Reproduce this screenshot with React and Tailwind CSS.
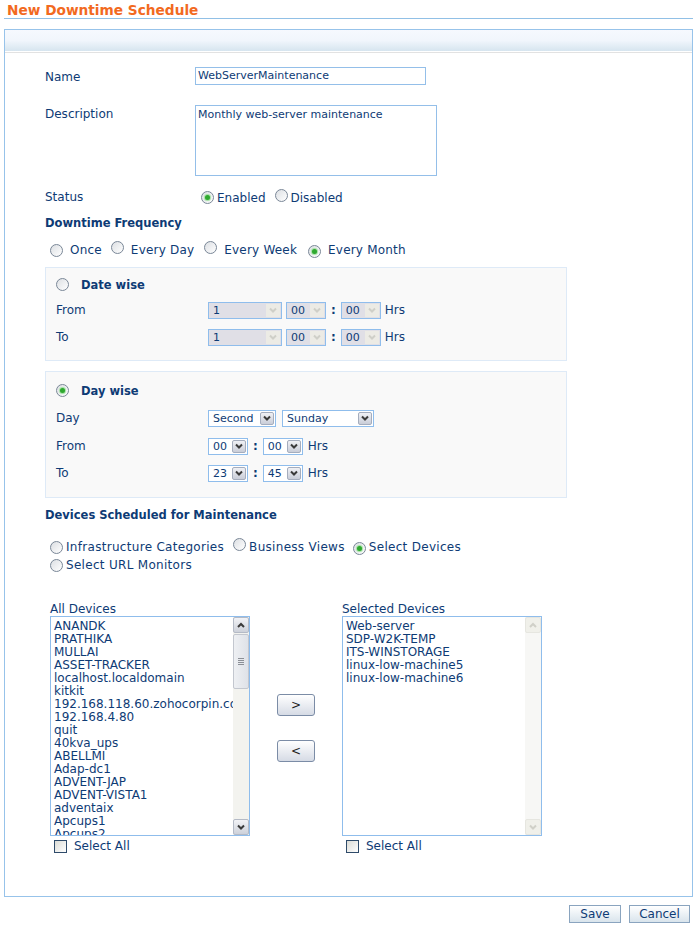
import React from 'react';

const font = { fontFamily: '"DejaVu Sans", Verdana, sans-serif' };

// radio button like the old XP style
const Radio = ({ checked }) => (
  <span className="inline-flex h-[13px] w-[13px] shrink-0 items-center justify-center rounded-full border border-[#7a8797] bg-gradient-to-br from-[#dcdfe3] to-white">
    {checked && <span className="h-[5px] w-[5px] rounded-full bg-[#2fa82f] shadow-[0_0_1px_1px_#9fe09f]" />}
  </span>
);

const Checkbox = () => (
  <span className="inline-block h-[13px] w-[13px] shrink-0 border border-[#2f4b6a] bg-gradient-to-br from-[#dcdcd6] to-white" />
);

const Chevron = ({ color = '#333', up = false }) => (
  <svg width="8" height="6" viewBox="0 0 8 6">
    <path d={up ? 'M1 5 L4 2 L7 5' : 'M1 1.5 L4 4.5 L7 1.5'} fill="none" stroke={color} strokeWidth="2" />
  </svg>
);

const Select = ({ value, className, disabled }) => (
  <div className={`flex h-[17px] items-stretch border border-[#8fbdec] text-[11px] ${disabled ? 'bg-[#e0dfe6]' : 'bg-white'} ${className}`}>
    <span className="flex-1 pl-[4px] leading-[15px]">{value}</span>
    {disabled ? (
      <span className="m-px flex w-[14px] items-center justify-center bg-[#ecebe5]">
        <Chevron color="#cfcfc8" />
      </span>
    ) : (
      <span className="m-px flex w-[14px] items-center justify-center rounded-[2px] border border-[#a5adbd] bg-gradient-to-b from-[#f0f1f5] to-[#c9cdd8]">
        <Chevron color="#3a3a3a" />
      </span>
    )}
  </div>
);

const Label = ({ children, className = '' }) => (
  <div className={`w-[150px] shrink-0 ${className}`}>{children}</div>
);

const allDevices = [
  'ANANDK', 'PRATHIKA', 'MULLAI', 'ASSET-TRACKER', 'localhost.localdomain', 'kitkit',
  '192.168.118.60.zohocorpin.com', '192.168.4.80', 'quit', '40kva_ups', 'ABELLMI',
  'Adap-dc1', 'ADVENT-JAP', 'ADVENT-VISTA1', 'adventaix', 'Apcups1', 'Apcups2',
];
const selectedDevices = ['Web-server', 'SDP-W2K-TEMP', 'ITS-WINSTORAGE', 'linux-low-machine5', 'linux-low-machine6'];

const ScrollArrow = ({ up, faded }) => (
  <div className={`flex h-[16px] w-[16px] items-center justify-center rounded-[2px] border ${faded ? 'border-[#e6e6e0] bg-[#f0f0ea]' : 'border-[#b4bac6] bg-gradient-to-b from-[#f2f3f6] to-[#cdd1da]'}`}>
    <Chevron up={up} color={faded ? '#d0d0c8' : '#3a3a3a'} />
  </div>
);

const ListBox = ({ items, active }) => (
  <div className="flex h-[220px] w-[200px] border border-[#8fbdec] bg-white">
    <div className="flex-1 overflow-hidden whitespace-nowrap pl-[3px] pt-[3px] leading-[13px]">
      {items.map((d) => (
        <div key={d}>{d}</div>
      ))}
    </div>
    <div className={`flex w-[16px] flex-col ${active ? 'bg-[#f3f3ef]' : 'bg-[#f7f7f5]'}`}>
      <ScrollArrow up faded={!active} />
      {active && (
        <div className="mt-px flex h-[55px] flex-col items-center justify-center gap-[1px] rounded-[2px] border border-[#c3c7cf] bg-gradient-to-r from-[#eef0f3] to-[#dfe2e8]">
          <span className="h-px w-[6px] bg-[#8b8f96]" />
          <span className="h-px w-[6px] bg-[#8b8f96]" />
          <span className="h-px w-[6px] bg-[#8b8f96]" />
          <span className="h-px w-[6px] bg-[#8b8f96]" />
        </div>
      )}
      <div className="flex-1" />
      <ScrollArrow faded={!active} />
    </div>
  </div>
);

const MoveButton = ({ children }) => (
  <button className="h-[22px] w-[38px] rounded-[3px] border border-[#7b8ca6] bg-gradient-to-b from-white to-[#d6dbe5] text-[12px] text-[#222]">
    {children}
  </button>
);

export default function App() {
  return (
    <div className="min-h-[929px] w-[697px] bg-white text-[12px] text-[#0e3b75]" style={font}>
      {/* page title */}
      <div className="h-[18px] pl-[7px] pt-[2px] text-[13.7px] font-bold leading-[16px] text-[#f26a1f]">New Downtime Schedule</div>
      <div className="mx-[4px] h-px bg-[#91c0e6]" />

      <div className="mx-[4px] mt-[10px] h-[868px] border border-[#97c3ea]">
        <div className="h-[21px] bg-gradient-to-b from-[#f6f9fe] via-[#f1f6fc] to-[#d6e5ef]" />
        <div className="h-[2px] border-t border-white bg-[#e2e2e2]" />

        <div className="pl-[40px]">
          {/* Name */}
          <div className="mt-[14px] flex h-[18px] items-center">
            <Label className="pt-[1px]">Name</Label>
            <div className="h-[18px] w-[231px] border border-[#94bfe9] pl-[2px] text-[11px] leading-[16px]">WebServerMaintenance</div>
          </div>

          {/* Description */}
          <div className="mt-[20px] flex items-start">
            <Label>Description</Label>
            <div className="h-[71px] w-[242px] border border-[#94bfe9] pl-[2px] pt-[1px] text-[11px]">Monthly web-server maintenance</div>
          </div>

          {/* Status */}
          <div className="mt-[11px] flex h-[20px] items-center">
            <Label>Status</Label>
            <div className="flex items-center pl-[6px] pt-[1px]">
              <Radio checked />
              <span className="ml-[3px]">Enabled</span>
              <span className="ml-[9px]"><Radio /></span>
              <span className="ml-[3px]">Disabled</span>
            </div>
          </div>

          <div className="mt-[5px] flex h-[20px] items-center pt-[3px] text-[11.5px] font-bold">Downtime Frequency</div>

          <div className="mt-[8px] flex h-[20px] items-center pl-[5px] tracking-[0.2px]">
            <Radio />
            <span className="ml-[7px]">Once</span>
            <span className="ml-[9px]"><Radio /></span>
            <span className="ml-[7px]">Every Day</span>
            <span className="ml-[10px]"><Radio /></span>
            <span className="ml-[7px]">Every Week</span>
            <span className="ml-[11px]"><Radio checked /></span>
            <span className="ml-[7px]">Every Month</span>
          </div>

          {/* Date wise */}
          <div className="mt-[7px] h-[94px] w-[522px] border border-[#deeaf7] bg-[#f9f9f9] pl-[10px] pt-[7px]">
            <div className="flex h-[18px] items-center">
              <Radio />
              <span className="ml-[12px] pt-[3px] text-[11.5px] font-bold">Date wise</span>
            </div>
            <div className="mt-[8px] flex h-[18px] items-center">
              <div className="w-[152px]">From</div>
              <Select disabled value="1" className="w-[74px]" />
              <Select disabled value="00" className="ml-[4px] w-[40px]" />
              <span className="mx-[5px] font-bold">:</span>
              <Select disabled value="00" className="w-[40px]" />
              <span className="ml-[4px]">Hrs</span>
            </div>
            <div className="mt-[9px] flex h-[18px] items-center">
              <div className="w-[152px]">To</div>
              <Select disabled value="1" className="w-[74px]" />
              <Select disabled value="00" className="ml-[4px] w-[40px]" />
              <span className="mx-[5px] font-bold">:</span>
              <Select disabled value="00" className="w-[40px]" />
              <span className="ml-[4px]">Hrs</span>
            </div>
          </div>

          {/* Day wise */}
          <div className="mt-[10px] h-[127px] w-[522px] border border-[#deeaf7] bg-[#f9f9f9] pl-[10px] pt-[9px]">
            <div className="flex h-[18px] items-center">
              <Radio checked />
              <span className="ml-[12px] pt-[3px] text-[11.5px] font-bold">Day wise</span>
            </div>
            <div className="mt-[10px] flex h-[18px] items-center">
              <div className="w-[152px]">Day</div>
              <Select value="Second" className="w-[68px]" />
              <Select value="Sunday" className="ml-[6px] w-[92px]" />
            </div>
            <div className="mt-[10px] flex h-[18px] items-center">
              <div className="w-[152px]">From</div>
              <Select value="00" className="w-[40px]" />
              <span className="mx-[5px] font-bold">:</span>
              <Select value="00" className="w-[40px]" />
              <span className="ml-[5px]">Hrs</span>
            </div>
            <div className="mt-[9px] flex h-[18px] items-center">
              <div className="w-[152px]">To</div>
              <Select value="23" className="w-[40px]" />
              <span className="mx-[5px] font-bold">:</span>
              <Select value="45" className="w-[40px]" />
              <span className="ml-[5px]">Hrs</span>
            </div>
          </div>

          <div className="mt-[6px] flex h-[20px] items-center pt-[3px] text-[11.5px] font-bold">Devices Scheduled for Maintenance</div>

          <div className="mt-[14px] pl-[5px] tracking-[0.3px]">
            <div className="flex h-[18px] items-center">
              <Radio />
              <span className="ml-[3px]">Infrastructure Categories</span>
              <span className="ml-[9px]"><Radio /></span>
              <span className="ml-[3px]">Business Views</span>
              <span className="ml-[8px]"><Radio checked /></span>
              <span className="ml-[3px]">Select Devices</span>
            </div>
            <div className="flex h-[18px] items-center">
              <Radio />
              <span className="ml-[3px]">Select URL Monitors</span>
            </div>
          </div>

          {/* device pickers */}
          <div className="mt-[28px] flex pl-[5px]">
            <div>
              <div className="h-[14px] leading-[14px]">All Devices</div>
              <ListBox items={allDevices} active />
              <div className="mt-[2px] flex h-[16px] items-center pl-[4px]">
                <Checkbox />
                <span className="ml-[7px]">Select All</span>
              </div>
            </div>
            <div className="flex w-[92px] flex-col items-center pt-[92px]">
              <MoveButton>&gt;</MoveButton>
              <div className="mt-[24px]">
                <MoveButton>&lt;</MoveButton>
              </div>
            </div>
            <div>
              <div className="h-[14px] leading-[14px]">Selected Devices</div>
              <ListBox items={selectedDevices} />
              <div className="mt-[2px] flex h-[16px] items-center pl-[4px]">
                <Checkbox />
                <span className="ml-[7px]">Select All</span>
              </div>
            </div>
          </div>
        </div>
      </div>

      <div className="mt-[8px] flex justify-end gap-[8px] pr-[7px]">
        <button className="h-[18px] w-[52px] border border-[#8aa4bf] bg-gradient-to-b from-white to-[#d9e4ec] leading-[16px] text-[#0e3b75]">Save</button>
        <button className="h-[18px] w-[61px] border border-[#8aa4bf] bg-gradient-to-b from-white to-[#d9e4ec] leading-[16px] text-[#0e3b75]">Cancel</button>
      </div>
    </div>
  );
}
